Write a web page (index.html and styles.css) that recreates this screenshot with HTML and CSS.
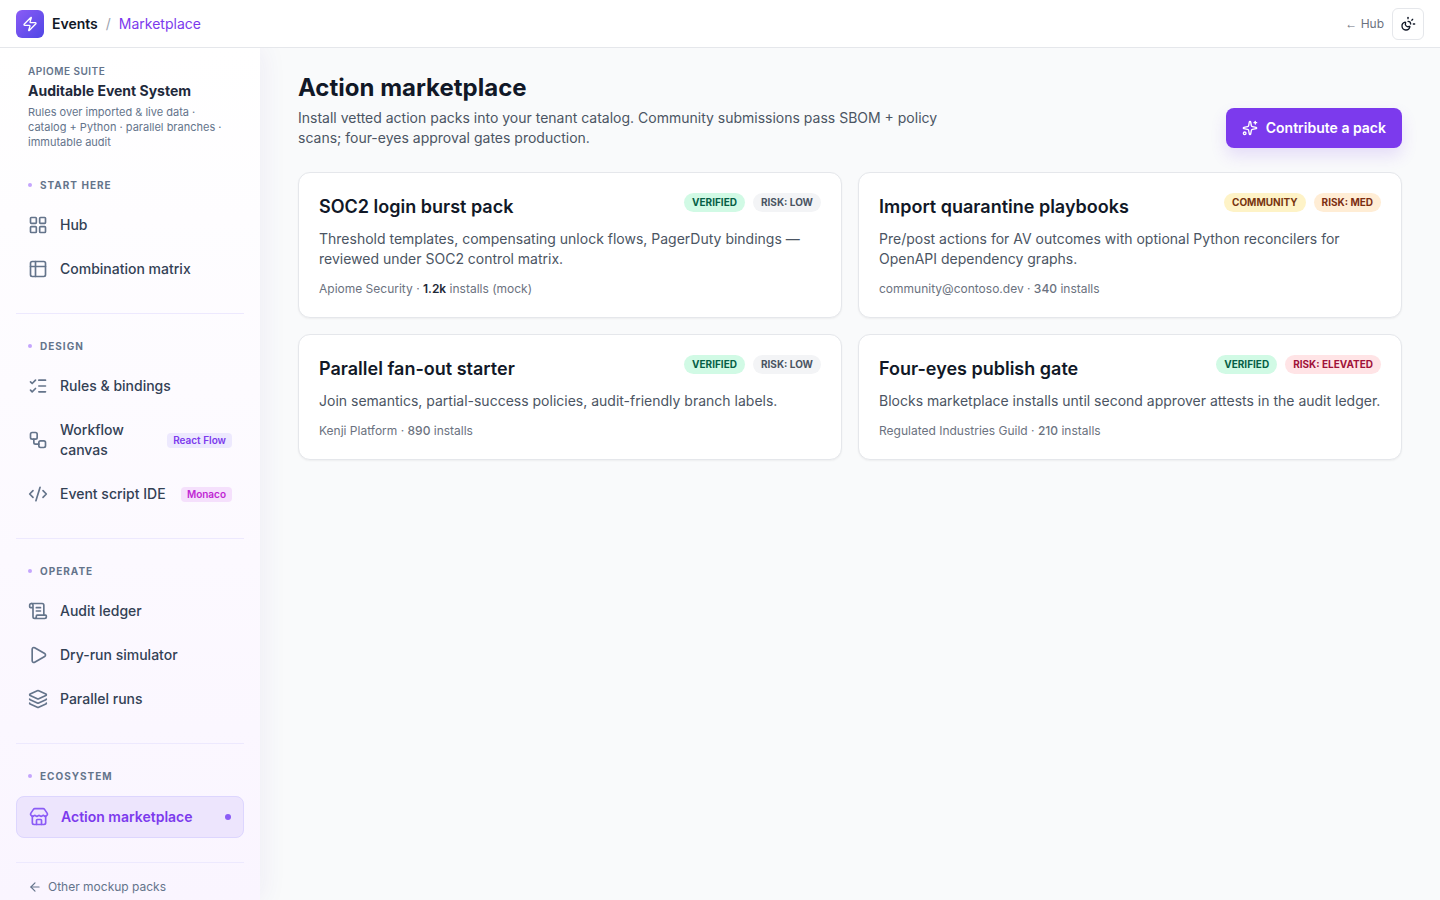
FILE: index.html
```
<!DOCTYPE html>
<html lang="en">
<head>
    <meta charset="UTF-8" />
    <meta name="viewport" content="width=device-width, initial-scale=1.0" />
    <title>Action marketplace</title>
    <link rel="stylesheet" href="styles.css">
</head>
<body>
    <header class="topbar">
        <div class="brand">
            <span class="logo">
                <svg class="icon icon-md" viewBox="0 0 24 24"><path d="M4 14a1 1 0 0 1-.78-1.63l9.9-10.2a.5.5 0 0 1 .86.46l-1.92 6.02A1 1 0 0 0 13 10h7a1 1 0 0 1 .78 1.63l-9.9 10.2a.5.5 0 0 1-.86-.46l1.92-6.02A1 1 0 0 0 11 14z"/></svg>
            </span>
            <strong>Events</strong>
            <span class="slash">/</span>
            <span class="crumb">Marketplace</span>
        </div>
        <div class="topbar-right">
            <a href="#" class="hub-link"><span class="arrow">←</span> Hub</a>
            <button class="theme-toggle" aria-label="Toggle theme">
                <svg class="icon icon-md" viewBox="0 0 24 24"><path d="M12 2v2"/><path d="M14.837 16.385a6 6 0 1 1-7.223-7.222c.624-.147.97.66.715 1.248a4 4 0 0 0 5.26 5.259c.589-.255 1.396.09 1.248.715"/><path d="M16 12a4 4 0 0 0-4-4"/><path d="m19 5-1.256 1.256"/><path d="M20 12h2"/></svg>
            </button>
        </div>
    </header>

    <div class="layout">
        <aside class="sidebar">
            <div class="suite">
                <div class="suite-label">APIOME SUITE</div>
                <div class="suite-title">Auditable Event System</div>
                <p class="suite-desc">Rules over imported &amp; live data · catalog + Python · parallel branches · immutable audit</p>
            </div>

            <nav>
                <div class="nav-section">
                    <div class="nav-label">START HERE</div>
                    <a href="#" class="nav-item">
                        <svg class="icon" viewBox="0 0 24 24"><rect x="3" y="3" width="7" height="7" rx="1"/><rect x="14" y="3" width="7" height="7" rx="1"/><rect x="14" y="14" width="7" height="7" rx="1"/><rect x="3" y="14" width="7" height="7" rx="1"/></svg>
                        <span class="nav-text">Hub</span>
                    </a>
                    <a href="#" class="nav-item">
                        <svg class="icon" viewBox="0 0 24 24"><rect x="3" y="3" width="18" height="18" rx="2"/><path d="M3 9h18M9 3v18"/></svg>
                        <span class="nav-text">Combination matrix</span>
                    </a>
                </div>

                <div class="nav-section">
                    <div class="nav-label">DESIGN</div>
                    <a href="#" class="nav-item">
                        <svg class="icon" viewBox="0 0 24 24"><path d="M13 5h8M13 12h8M13 19h8"/><path d="m3 17 2 2 4-4"/><path d="m3 7 2 2 4-4"/></svg>
                        <span class="nav-text">Rules &amp; bindings</span>
                    </a>
                    <a href="#" class="nav-item">
                        <svg class="icon" viewBox="0 0 24 24"><rect x="3" y="3" width="8" height="8" rx="2"/><path d="M7 11v4a2 2 0 0 0 2 2h4"/><rect x="13" y="13" width="8" height="8" rx="2"/></svg>
                        <span class="nav-text">Workflow canvas</span>
                        <span class="tag tag-violet">React Flow</span>
                    </a>
                    <a href="#" class="nav-item">
                        <svg class="icon" viewBox="0 0 24 24"><path d="m18 16 4-4-4-4"/><path d="m6 8-4 4 4 4"/><path d="m14.5 4-5 16"/></svg>
                        <span class="nav-text">Event script IDE</span>
                        <span class="tag tag-fuchsia">Monaco</span>
                    </a>
                </div>

                <div class="nav-section">
                    <div class="nav-label">OPERATE</div>
                    <a href="#" class="nav-item">
                        <svg class="icon" viewBox="0 0 24 24"><path d="M15 12h-5"/><path d="M15 8h-5"/><path d="M19 17V5a2 2 0 0 0-2-2H4"/><path d="M8 21h12a2 2 0 0 0 2-2v-1a1 1 0 0 0-1-1H11a1 1 0 0 0-1 1v1a2 2 0 1 1-4 0V5a2 2 0 1 0-4 0v2a1 1 0 0 0 1 1h3"/></svg>
                        <span class="nav-text">Audit ledger</span>
                    </a>
                    <a href="#" class="nav-item">
                        <svg class="icon" viewBox="0 0 24 24"><path d="M5 5a2 2 0 0 1 3.008-1.728l11.997 6.998a2 2 0 0 1 .003 3.458l-12 7A2 2 0 0 1 5 19z"/></svg>
                        <span class="nav-text">Dry-run simulator</span>
                    </a>
                    <a href="#" class="nav-item">
                        <svg class="icon" viewBox="0 0 24 24"><path d="M12.83 2.18a2 2 0 0 0-1.66 0L2.6 6.08a1 1 0 0 0 0 1.83l8.58 3.91a2 2 0 0 0 1.66 0l8.58-3.9a1 1 0 0 0 0-1.83z"/><path d="M2 12a1 1 0 0 0 .58.91l8.6 3.91a2 2 0 0 0 1.65 0l8.58-3.9A1 1 0 0 0 22 12"/><path d="M2 17a1 1 0 0 0 .58.91l8.6 3.91a2 2 0 0 0 1.65 0l8.58-3.9A1 1 0 0 0 22 17"/></svg>
                        <span class="nav-text">Parallel runs</span>
                    </a>
                </div>

                <div class="nav-section">
                    <div class="nav-label">ECOSYSTEM</div>
                    <a href="#" class="nav-item active">
                        <svg class="icon" viewBox="0 0 24 24"><path d="M15 21v-5a1 1 0 0 0-1-1h-4a1 1 0 0 0-1 1v5"/><path d="M17.774 10.31a1.12 1.12 0 0 0-1.549 0 2.5 2.5 0 0 1-3.451 0 1.12 1.12 0 0 0-1.548 0 2.5 2.5 0 0 1-3.452 0 1.12 1.12 0 0 0-1.549 0 2.5 2.5 0 0 1-3.77-3.248l2.889-4.184A2 2 0 0 1 7 2h10a2 2 0 0 1 1.653.873l2.895 4.192a2.5 2.5 0 0 1-3.774 3.244"/><path d="M4 10.95V19a2 2 0 0 0 2 2h12a2 2 0 0 0 2-2v-8.05"/></svg>
                        <span class="nav-text">Action marketplace</span>
                        <span class="active-dot"></span>
                    </a>
                </div>
            </nav>

            <div class="sidebar-footer">
                <a href="#" class="back-link">
                    <svg class="icon icon-sm" viewBox="0 0 24 24"><path d="m12 19-7-7 7-7"/><path d="M19 12H5"/></svg>
                    Other mockup packs
                </a>
            </div>
        </aside>

        <main class="main">
            <div class="content">
                <div class="page-head">
                    <div>
                        <h1>Action marketplace</h1>
                        <p class="lead">Install vetted action packs into your tenant catalog. Community submissions pass SBOM + policy scans; four-eyes approval gates production.</p>
                    </div>
                    <button class="btn-primary">
                        <svg class="icon icon-md" viewBox="0 0 24 24"><path d="M11.017 2.814a1 1 0 0 1 1.966 0l1.051 5.558a2 2 0 0 0 1.594 1.594l5.558 1.051a1 1 0 0 1 0 1.966l-5.558 1.051a2 2 0 0 0-1.594 1.594l-1.051 5.558a1 1 0 0 1-1.966 0l-1.051-5.558a2 2 0 0 0-1.594-1.594l-5.558-1.051a1 1 0 0 1 0-1.966l5.558-1.051a2 2 0 0 0 1.594-1.594z"/><path d="M20 2v4"/><path d="M22 4h-4"/><circle cx="4" cy="20" r="2"/></svg>
                        Contribute a pack
                    </button>
                </div>

                <div class="pack-grid">
                    <article class="pack">
                        <div class="pack-head">
                            <h2>SOC2 login burst pack</h2>
                            <div class="badges">
                                <span class="badge badge-green">VERIFIED</span>
                                <span class="badge badge-gray">RISK: LOW</span>
                            </div>
                        </div>
                        <p class="pack-desc">Threshold templates, compensating unlock flows, PagerDuty bindings — reviewed under SOC2 control matrix.</p>
                        <p class="pack-meta">Apiome Security · <strong>1.2k</strong> installs (mock)</p>
                    </article>

                    <article class="pack">
                        <div class="pack-head">
                            <h2>Import quarantine playbooks</h2>
                            <div class="badges">
                                <span class="badge badge-amber">COMMUNITY</span>
                                <span class="badge badge-orange">RISK: MED</span>
                            </div>
                        </div>
                        <p class="pack-desc">Pre/post actions for AV outcomes with optional Python reconcilers for OpenAPI dependency graphs.</p>
                        <p class="pack-meta">community@contoso.dev · <span class="count">340</span> installs</p>
                    </article>

                    <article class="pack">
                        <div class="pack-head">
                            <h2>Parallel fan-out starter</h2>
                            <div class="badges">
                                <span class="badge badge-green">VERIFIED</span>
                                <span class="badge badge-gray">RISK: LOW</span>
                            </div>
                        </div>
                        <p class="pack-desc">Join semantics, partial-success policies, audit-friendly branch labels.</p>
                        <p class="pack-meta">Kenji Platform · <span class="count">890</span> installs</p>
                    </article>

                    <article class="pack">
                        <div class="pack-head">
                            <h2>Four-eyes publish gate</h2>
                            <div class="badges">
                                <span class="badge badge-green">VERIFIED</span>
                                <span class="badge badge-rose">RISK: ELEVATED</span>
                            </div>
                        </div>
                        <p class="pack-desc">Blocks marketplace installs until second approver attests in the audit ledger.</p>
                        <p class="pack-meta">Regulated Industries Guild · <span class="count">210</span> installs</p>
                    </article>
                </div>
            </div>
        </main>
    </div>
</body>
</html>
```
FILE: styles.css
```
* {
    box-sizing: border-box;
    margin: 0;
}
body {
    display: flex;
    flex-direction: column;
    height: 100vh;
    overflow: hidden;
    background-color: #f9fafb;
    color: #111827;
    font-family: Inter, "Liberation Sans", sans-serif;
    font-size: 14px;
    line-height: 20px;
}
a {
    color: inherit;
    text-decoration: none;
}
button {
    font: inherit;
    cursor: pointer;
}
.icon {
    flex-shrink: 0;
    width: 20px;
    height: 20px;
    fill: none;
    stroke: currentColor;
    stroke-width: 2;
    stroke-linecap: round;
    stroke-linejoin: round;
}
.icon-md {
    width: 16px;
    height: 16px;
}
.icon-sm {
    width: 14px;
    height: 14px;
}

/* Top bar */
.topbar {
    display: flex;
    flex-shrink: 0;
    align-items: center;
    justify-content: space-between;
    height: 48px;
    padding: 0 16px;
    background-color: #fff;
    border-bottom: 1px solid #e5e7eb;
    position: relative;
    z-index: 2;
}
.brand,
.topbar-right {
    display: flex;
    align-items: center;
    gap: 8px;
}
.brand strong {
    font-weight: 600;
}
.logo {
    display: flex;
    align-items: center;
    justify-content: center;
    width: 28px;
    height: 28px;
    border-radius: 6px;
    background: linear-gradient(135deg, #8b5cf6, #4f46e5);
    color: #fff;
}
.slash {
    color: #9ca3af;
}
.crumb {
    color: #7c3aed;
}
.hub-link {
    color: #6b7280;
    font-size: 12px;
    line-height: 16px;
}
.arrow {
    font-family: "Liberation Sans", sans-serif;
}
.theme-toggle {
    display: flex;
    align-items: center;
    justify-content: center;
    width: 32px;
    height: 32px;
    padding: 0;
    border: 1px solid #e5e7eb;
    border-radius: 6px;
    background-color: #fff;
    color: #111827;
}

/* Sidebar */
.layout {
    display: flex;
    flex: 1;
    min-height: 0;
}
.sidebar {
    flex-shrink: 0;
    width: 260px;
    padding: 16px;
    overflow: hidden;
    background: linear-gradient(180deg, #fff, #fdfbff 40%, #faf5ff);
    box-shadow: 4px 0 24px rgba(76, 29, 149, 0.06);
    position: relative;
    z-index: 1;
}
.suite {
    padding: 0 12px 3px;
}
.suite-label {
    margin-bottom: 2px;
    color: #64748b;
    font-size: 10px;
    font-weight: 600;
    line-height: 15px;
    letter-spacing: 0.05em;
}
.suite-title {
    color: #1e293b;
    font-weight: 700;
}
.suite-desc {
    margin-top: 4px;
    color: #64748b;
    font-size: 11px;
    line-height: 15px;
}
.nav-section {
    display: flex;
    flex-direction: column;
    gap: 4px;
    padding: 24px 0;
    border-bottom: 1px solid #ede9fe;
}
.nav-label {
    display: flex;
    align-items: center;
    gap: 8px;
    margin-bottom: 8px;
    padding: 0 12px;
    color: #64748b;
    font-size: 10px;
    font-weight: 700;
    line-height: 16px;
    letter-spacing: 0.1em;
}
.nav-label::before {
    content: "";
    width: 4px;
    height: 4px;
    border-radius: 50%;
    background-color: #c4a5fd;
}
.nav-item {
    display: flex;
    align-items: center;
    gap: 12px;
    padding: 10px 12px;
    border-radius: 8px;
    color: #334155;
    font-weight: 500;
}
.nav-item .icon {
    color: #64748b;
}
.nav-text {
    flex: 1;
}
.nav-item.active {
    border: 1px solid #ddd6fe;
    background-color: #ede5fd;
    color: #7c3aed;
    font-weight: 600;
}
.nav-item.active .icon {
    color: #8b5cf6;
}
.active-dot {
    width: 6px;
    height: 6px;
    border-radius: 50%;
    background-color: #8b5cf6;
}
.tag {
    padding: 0 6px;
    border-radius: 4px;
    font-size: 10px;
    font-weight: 600;
    line-height: 15px;
    white-space: nowrap;
}
.tag-violet {
    background-color: #ede9fe;
    color: #7c3aed;
}
.tag-fuchsia {
    background-color: #f5e0fc;
    color: #c026d3;
}
.sidebar-footer {
    padding: 16px 12px 0;
}
.back-link {
    display: flex;
    align-items: center;
    gap: 6px;
    color: #64748b;
    font-size: 12px;
    line-height: 16px;
}

/* Main */
.main {
    flex: 1;
    min-width: 0;
    overflow: auto;
}
.content {
    max-width: 1152px;
    margin: 0 auto;
    padding: 24px;
}
.page-head {
    display: flex;
    align-items: flex-end;
    justify-content: space-between;
    gap: 16px;
    margin-bottom: 24px;
}
h1 {
    color: #111827;
    font-size: 24px;
    font-weight: 700;
    line-height: 32px;
}
.lead {
    max-width: 672px;
    margin-top: 4px;
    color: #4b5563;
}
.btn-primary {
    display: flex;
    flex-shrink: 0;
    align-items: center;
    gap: 8px;
    padding: 10px 16px;
    border: none;
    border-radius: 8px;
    background-color: #7c3aed;
    box-shadow: 0 8px 16px rgba(124, 58, 237, 0.15);
    color: #fff;
    font-weight: 600;
}
.btn-primary:hover {
    background-color: #6d28d9;
}
.pack-grid {
    display: grid;
    grid-template-columns: repeat(2, 1fr);
    gap: 16px;
}
.pack {
    padding: 20px;
    border: 1px solid #e5e7eb;
    border-radius: 12px;
    background-color: #fff;
    box-shadow: 0 1px 2px rgba(0, 0, 0, 0.05);
}
.pack-head {
    display: flex;
    align-items: flex-start;
    justify-content: space-between;
    gap: 8px;
}
h2 {
    color: #111827;
    font-size: 18px;
    font-weight: 600;
    line-height: 28px;
}
.badges {
    display: flex;
    gap: 8px;
}
.badge {
    padding: 2px 8px;
    border-radius: 10px;
    font-size: 10px;
    font-weight: 700;
    line-height: 15px;
    white-space: nowrap;
}
.badge-green {
    background-color: #d1fae5;
    color: #065f46;
}
.badge-gray {
    background-color: #f3f4f6;
    color: #4b5563;
}
.badge-amber {
    background-color: #fef3c7;
    color: #78350f;
}
.badge-orange {
    background-color: #ffedd5;
    color: #7c2d12;
}
.badge-rose {
    background-color: #ffe4e6;
    color: #9f1239;
}
.pack-desc {
    margin-top: 8px;
    color: #4b5563;
}
.pack-meta {
    margin-top: 12px;
    color: #6b7280;
    font-size: 12px;
    line-height: 16px;
}
.pack-meta strong {
    color: #1f2937;
    font-weight: 600;
}
.count {
    font-weight: 500;
}
```
